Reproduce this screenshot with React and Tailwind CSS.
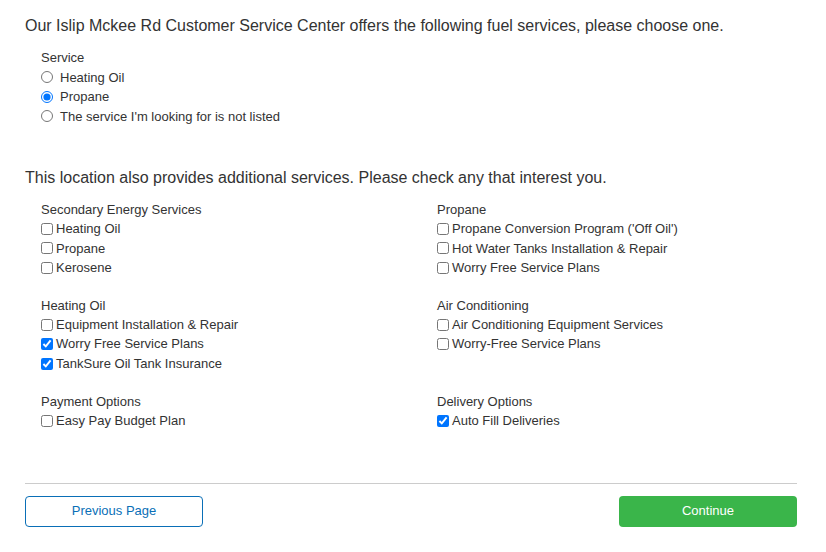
import React, { useState } from "react"

const font = { fontFamily: '"Liberation Sans", Arial, sans-serif' }

const groups = [
  [
    {
      title: "Secondary Energy Services",
      items: [
        ["Heating Oil", false],
        ["Propane", false],
        ["Kerosene", false]
      ]
    },
    {
      title: "Propane",
      items: [
        ["Propane Conversion Program ('Off Oil')", false],
        ["Hot Water Tanks Installation & Repair", false],
        ["Worry Free Service Plans", false]
      ]
    }
  ],
  [
    {
      title: "Heating Oil",
      items: [
        ["Equipment Installation & Repair", false],
        ["Worry Free Service Plans", true],
        ["TankSure Oil Tank Insurance", true]
      ]
    },
    {
      title: "Air Conditioning",
      items: [
        ["Air Conditioning Equipment Services", false],
        ["Worry-Free Service Plans", false]
      ]
    }
  ],
  [
    {
      title: "Payment Options",
      items: [["Easy Pay Budget Plan", false]]
    },
    {
      title: "Delivery Options",
      items: [["Auto Fill Deliveries", true]]
    }
  ]
]

const CheckItem = ({ label, checked }) => {
  const [on, setOn] = useState(checked)
  return (
    <label className="flex items-center h-[19.3px]">
      <input
        type="checkbox"
        checked={on}
        onChange={() => setOn(!on)}
        className="m-0 w-[12px] h-[12px] mr-[3px]"
      />
      <span>{label}</span>
    </label>
  )
}

const Group = ({ title, items }) => (
  <div>
    <div className="h-[19.3px]">{title}</div>
    {items.map(([label, checked], i) => (
      <CheckItem key={i} label={label} checked={checked} />
    ))}
  </div>
)

export default function App() {
  const [service, setService] = useState("propane")

  const services = [
    ["heating", "Heating Oil"],
    ["propane", "Propane"],
    ["other", "The service I'm looking for is not listed"]
  ]

  return (
    <div className="bg-white min-h-[552px] text-[#333] pt-[15px]" style={font}>
      <div className="w-[772px] ml-[25px]">
        {/* Fuel services */}
        <h2 className="text-[16px] leading-[22px]">
          Our Islip Mckee Rd Customer Service Center offers the following fuel services, please choose one.
        </h2>

        <div className="pl-[16px] mt-[11px] text-[13px] leading-[19.5px]">
          <div className="h-[19.5px]">Service</div>
          {services.map(([value, label]) => (
            <label key={value} className="flex items-center h-[19.5px]">
              <input
                type="radio"
                name="service"
                checked={service === value}
                onChange={() => setService(value)}
                className="m-0 w-[12px] h-[12px] mr-[7px]"
              />
              <span>{label}</span>
            </label>
          ))}
        </div>

        {/* Additional services */}
        <h2 className="text-[16px] leading-[22px] mt-[41px]">
          This location also provides additional services. Please check any that interest you.
        </h2>

        <div className="pl-[16px] mt-[11px] text-[13px] leading-[19.5px] grid grid-cols-[396px_1fr] gap-y-[18.8px]">
          {groups.map((row, r) =>
            row.map((g, c) => <Group key={`${r}-${c}`} title={g.title} items={g.items} />)
          )}
        </div>

        <div className="mt-[52px] border-t border-[#cccccc]" />

        <div className="flex justify-between mt-[12px]">
          <button className="w-[178px] h-[31px] border border-[#0a6fb7] rounded-[4px] text-[#0a6fb7] text-[13px] bg-white">
            Previous Page
          </button>
          <button className="w-[178px] h-[31px] rounded-[4px] bg-[#3ab54a] text-white text-[13px]">
            Continue
          </button>
        </div>
      </div>
    </div>
  )
}
